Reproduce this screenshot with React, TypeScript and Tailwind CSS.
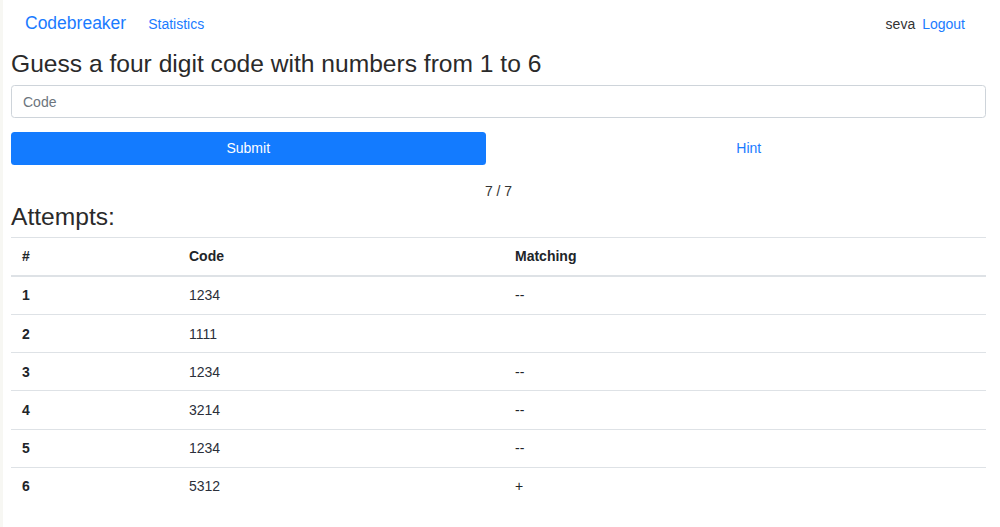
import React from "react";

const rows = [
  { n: 1, code: "1234", m: "--" },
  { n: 2, code: "1111", m: "" },
  { n: 3, code: "1234", m: "--" },
  { n: 4, code: "3214", m: "--" },
  { n: 5, code: "1234", m: "--" },
  { n: 6, code: "5312", m: "+" },
];

export default function App() {
  return (
    <div
      className="min-h-[527px] bg-white text-[#212529] text-[14px] border-l-[3px] border-[#f7f7f3]"
      style={{ fontFamily: '"Liberation Sans", Arial, sans-serif' }}
    >
      <div className="pl-[8px] pr-[14px]">
        <nav className="h-[47px] flex items-center px-[14px]">
          <a className="text-[17.5px] text-[#1a7bff] mr-[21px] leading-none">Codebreaker</a>
          <a className="text-[14px] text-[#1a7bff] leading-none ml-[1px]">Statistics</a>
          <div className="flex-1" />
          <span className="text-[14px] text-[#333] leading-none">seva</span>
          <a className="text-[14px] text-[#1a7bff] leading-none ml-[7px] mr-[7px]">Logout</a>
        </nav>

        <h3 className="mt-[2px] text-[24.6px] leading-[29.4px] font-normal text-[#2a2a2a]">
          Guess a four digit code with numbers from 1 to 6
        </h3>

        <input
          className="mt-[7px] w-full h-[33px] border border-[#ced4da] rounded-[3.5px] px-[11px] text-[14px] placeholder:text-[#6c757d] outline-none"
          placeholder="Code"
        />

        <div className="mt-[14px] grid grid-cols-2 gap-[26px]">
          <button className="h-[33px] rounded-[3.5px] bg-[#137bff] text-white text-[14px]">Submit</button>
          <button className="h-[33px] text-[#1a7bff] text-[14px]">Hint</button>
        </div>

        <div className="mt-[16px] text-center leading-[21px] text-[14px] text-[#333]">7 / 7</div>

        <h3 className="mt-[0px] text-[24.6px] leading-[29.4px] font-normal text-[#2a2a2a]">Attempts:</h3>

        <table className="mt-[5px] w-full border-collapse text-[14px]">
          <thead>
            <tr>
              <th className="w-[167px] text-left font-bold px-[11px] py-[8px] leading-[21px] border-t border-b-2 border-[#dee2e6]">#</th>
              <th className="w-[326px] text-left font-bold px-[11px] py-[8px] leading-[21px] border-t border-b-2 border-[#dee2e6]">Code</th>
              <th className="text-left font-bold px-[11px] py-[8px] leading-[21px] border-t border-b-2 border-[#dee2e6]">Matching</th>
            </tr>
          </thead>
          <tbody>
            {rows.map((r, i) => (
              <tr key={r.n}>
                <td className={`px-[11px] py-[8.6px] leading-[20px] font-bold ${i > 0 ? "border-t border-[#dee2e6]" : ""}`}>{r.n}</td>
                <td className={`px-[11px] py-[8.6px] leading-[20px] text-[#2b2f3a] ${i > 0 ? "border-t border-[#dee2e6]" : ""}`}>{r.code}</td>
                <td className={`px-[11px] py-[8.6px] leading-[20px] ${i > 0 ? "border-t border-[#dee2e6]" : ""}`}>{r.m}</td>
              </tr>
            ))}
          </tbody>
        </table>
      </div>
    </div>
  );
}
